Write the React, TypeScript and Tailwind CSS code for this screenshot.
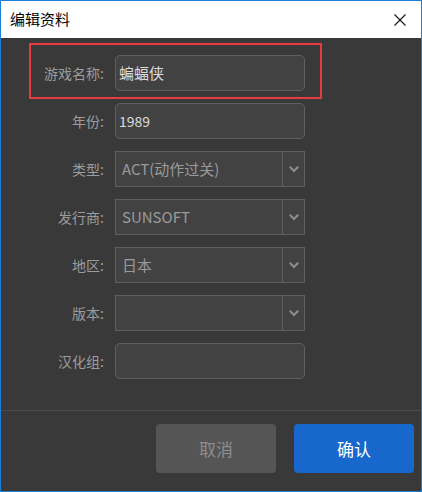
import React from 'react';

const FONT = { fontFamily: '"Noto Sans CJK SC", "Noto Sans", sans-serif' };

const Chevron = () => (
  <svg width="10" height="7" viewBox="0 0 10 7" fill="none">
    <path d="M1.5 1.5 L5 5 L8.5 1.5" stroke="#8c8c8c" strokeWidth="2.2" strokeLinecap="square" />
  </svg>
);

const Row: React.FC<{ label: string; children: React.ReactNode }> = ({ label, children }) => (
  <div className="flex items-center h-[36px]">
    <div className="w-[103px] text-right text-[14px] text-[#9c9c9c] leading-none">{label}</div>
    <div className="ml-[11px] w-[190px] h-full">{children}</div>
  </div>
);

const TextInput: React.FC<{ value?: string; big?: boolean }> = ({ value = '', big }) => (
  <div
    className={`h-full w-full rounded-[5px] border border-[#5f5f5f] bg-[#424242] flex items-center pl-[3px] text-[#dcdcdc] ${
      big ? 'text-[15px]' : 'text-[14px]'
    }`}
  >
    {value}
  </div>
);

const Select: React.FC<{ value?: string }> = ({ value = '' }) => (
  <div className="h-full w-full border border-[#5f5f5f] bg-[#424242] flex">
    <div className="flex-1 flex items-center pl-[6px] text-[15px] text-[#9a9a9a]">{value}</div>
    <div className="w-[22px] border-l border-[#5f5f5f] flex items-center justify-center">
      <Chevron />
    </div>
  </div>
);

export default function App() {
  return (
    <div className="w-[422px] h-[492px] border border-[#1a7fd6] flex flex-col" style={FONT}>
      {/* title bar */}
      <div className="h-[37px] bg-white flex items-center justify-between pl-[9px] pr-[15px]">
        <span className="text-[15px] text-black">编辑资料</span>
        <svg width="12" height="12" viewBox="0 0 12 12">
          <path d="M0.5 0.5 L11.5 11.5 M11.5 0.5 L0.5 11.5" stroke="#111" strokeWidth="1.1" />
        </svg>
      </div>

      <div className="flex-1 bg-[#393939] flex flex-col">
        <div className="relative h-[372px] pt-[17px] flex flex-col gap-3">
          {/* highlight annotation */}
          <div className="absolute left-[28px] top-[5px] w-[293px] h-[56px] border-2 border-[#e83c3c] pointer-events-none" />
          <Row label="游戏名称:">
            <TextInput value="蝙蝠侠" big />
          </Row>
          <Row label="年份:">
            <TextInput value="1989" />
          </Row>
          <Row label="类型:">
            <Select value="ACT(动作过关)" />
          </Row>
          <Row label="发行商:">
            <Select value="SUNSOFT" />
          </Row>
          <Row label="地区:">
            <Select value="日本" />
          </Row>
          <Row label="版本:">
            <Select />
          </Row>
          <Row label="汉化组:">
            <TextInput />
          </Row>
        </div>

        <div className="flex-1 border-t border-[#4c4c4c] flex justify-end items-start pt-[13px] pr-[7px] gap-[18px]">
          <button className="w-[120px] h-[49px] rounded-[4px] bg-[#555555] text-[17px] text-[#8e8e8e]">取消</button>
          <button className="w-[120px] h-[49px] rounded-[4px] bg-[#1767cc] text-[17px] text-white">确认</button>
        </div>
      </div>
    </div>
  );
}
